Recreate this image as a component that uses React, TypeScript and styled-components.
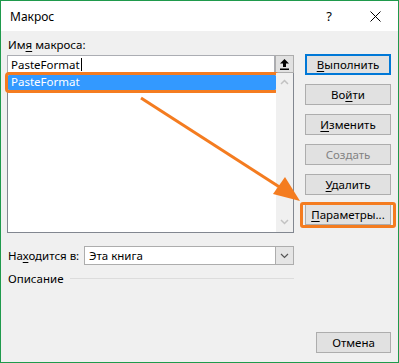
import styled, { createGlobalStyle } from "styled-components"

const GlobalStyle = createGlobalStyle`
  html, body {
    margin: 0;
    padding: 0;
    background: #ffffff;
  }
`

const ORANGE = "#f47c20"

const Window = styled.div`
  position: relative;
  width: 399px;
  height: 363px;
  box-sizing: border-box;
  border: 1px solid #1f9a4c;
  background: #f0f0f0;
  display: flex;
  flex-direction: column;
  font-family: "Noto Sans", "Liberation Sans", sans-serif;
  font-size: 11.5px;
  color: #000;
`

const TitleBar = styled.div`
  height: 30px;
  background: #ffffff;
  display: flex;
  align-items: center;
  padding-left: 9px;
`

const Title = styled.div`
  flex: 1;
  font-size: 12px;
`

const TitleButton = styled.div`
  width: 46px;
  height: 30px;
  display: flex;
  align-items: center;
  justify-content: center;
  font-size: 13px;
`

const Body = styled.div`
  flex: 1;
  display: flex;
  flex-direction: column;
  padding: 6px 7px 9px 6px;
`

const Main = styled.div`
  display: grid;
  grid-template-columns: 287px 86px;
  column-gap: 11px;
`

const LeftColumn = styled.div`
  display: flex;
  flex-direction: column;
`

const Label = styled.div`
  height: 18px;
  line-height: 16px;
  padding-left: 1px;
`

const InputRow = styled.div`
  display: flex;
  height: 18px;
`

const TextInput = styled.div`
  flex: 1;
  box-sizing: border-box;
  border: 1px solid #abadb3;
  background: #fff;
  padding-left: 3px;
  line-height: 15px;
  display: flex;
  align-items: center;
`

const Caret = styled.span`
  display: inline-block;
  width: 1px;
  height: 13px;
  background: #000;
  margin-left: 1px;
`

const IconButton = styled.div`
  width: 19px;
  box-sizing: border-box;
  border: 1px solid #adadad;
  background: #e1e1e1;
  display: flex;
  align-items: center;
  justify-content: center;
`

const ListBox = styled.div`
  height: 160px;
  box-sizing: border-box;
  border: 1px solid #828790;
  border-top: none;
  background: #fff;
  display: flex;
`

const ListItems = styled.div`
  flex: 1;
  padding-top: 2px;
`

const ListItem = styled.div<{ $selected?: boolean }>`
  height: 15px;
  line-height: 14px;
  padding-left: 3px;
  background: ${(p) => (p.$selected ? "#3399ff" : "transparent")};
  color: ${(p) => (p.$selected ? "#fff" : "#000")};
  outline: ${(p) => (p.$selected ? `3px solid ${ORANGE}` : "none")};
  outline-offset: 0;
  border-radius: 1px;
`

const ScrollBar = styled.div`
  width: 17px;
  background: #f0f0f0;
  display: flex;
  flex-direction: column;
  justify-content: space-between;
  align-items: center;
  padding: 6px 0 7px;
`

const Combo = styled.div`
  flex: 1;
  display: flex;
  height: 19px;
  box-sizing: border-box;
  border: 1px solid #adadad;
  background: #fff;
`

const ComboText = styled.div`
  flex: 1;
  padding-left: 4px;
  line-height: 17px;
`

const ComboButton = styled.div`
  width: 17px;
  border-left: 1px solid #adadad;
  background: #e5e5e5;
  display: flex;
  align-items: center;
  justify-content: center;
`

const LocationRow = styled.div`
  display: flex;
  align-items: center;
  margin-top: 13px;
`

const LocationLabel = styled.div`
  width: 76px;
  padding-left: 1px;
`

const SectionRow = styled.div`
  display: flex;
  align-items: center;
  gap: 7px;
  margin-top: 5px;
  padding-left: 1px;
  height: 16px;
`

const SectionLine = styled.div`
  flex: 1;
  height: 1px;
  background: #dcdcdc;
`

const ButtonColumn = styled.div`
  display: flex;
  flex-direction: column;
  gap: 9px;
  padding-top: 17px;
`

const Button = styled.div<{ $default?: boolean; $disabled?: boolean; $highlight?: boolean }>`
  position: relative;
  height: 21px;
  box-sizing: border-box;
  border: ${(p) => (p.$default ? "2px solid #0078d7" : "1px solid #adadad")};
  background: #e1e1e1;
  color: ${(p) => (p.$disabled ? "#838383" : "#000")};
  display: flex;
  align-items: center;
  justify-content: center;

  ${(p) =>
    p.$highlight &&
    `
    &::after {
      content: "";
      position: absolute;
      inset: -3px -6px -4px -6px;
      border: 3px solid ${ORANGE};
      border-radius: 3px;
    }
  `}
`

const Footer = styled.div`
  flex: 1;
  display: flex;
  justify-content: flex-end;
  align-items: flex-end;
`

const CancelButton = styled(Button)`
  width: 75px;
`

const Key = styled.span`
  text-decoration: underline;
  text-underline-offset: 2px;
`

const Overlay = styled.svg`
  position: absolute;
  left: 0;
  top: 0;
  pointer-events: none;
`

function Chevron({ down }: { down?: boolean }) {
  return (
    <svg width="9" height="6" viewBox="0 0 9 6">
      <polyline
        points={down ? "1,1 4.5,4.5 8,1" : "1,5 4.5,1.5 8,5"}
        fill="none"
        stroke="#c2c2c2"
        strokeWidth="1.5"
      />
    </svg>
  )
}

function App() {
  return (
    <>
      <GlobalStyle />
      <Window>
        <TitleBar>
          <Title>Макрос</Title>
          <TitleButton>?</TitleButton>
          <TitleButton>
            <svg width="11" height="11" viewBox="0 0 11 11">
              <path d="M0.5 0.5 L10.5 10.5 M10.5 0.5 L0.5 10.5" stroke="#000" strokeWidth="1" />
            </svg>
          </TitleButton>
        </TitleBar>

        <Body>
          <Main>
            <LeftColumn>
              <Label>
                Им<Key>я</Key> макроса:
              </Label>
              <InputRow>
                <TextInput>
                  PasteFormat
                  <Caret />
                </TextInput>
                <IconButton>
                  <svg width="9" height="11" viewBox="0 0 9 11">
                    <path d="M4.5 0 L9 4.5 L6 4.5 L6 8 L3 8 L3 4.5 L0 4.5 Z" fill="#000" />
                    <rect x="0" y="9.5" width="9" height="1.5" fill="#000" />
                  </svg>
                </IconButton>
              </InputRow>
              <ListBox>
                <ListItems>
                  <ListItem $selected>PasteFormat</ListItem>
                </ListItems>
                <ScrollBar>
                  <Chevron />
                  <Chevron down />
                </ScrollBar>
              </ListBox>

              <LocationRow>
                <LocationLabel>
                  На<Key>х</Key>одится в:
                </LocationLabel>
                <Combo>
                  <ComboText>Эта книга</ComboText>
                  <ComboButton>
                    <svg width="9" height="6" viewBox="0 0 9 6">
                      <polyline points="1,1 4.5,4.5 8,1" fill="none" stroke="#555" strokeWidth="1.2" />
                    </svg>
                  </ComboButton>
                </Combo>
              </LocationRow>

              <SectionRow>
                <span>Описание</span>
                <SectionLine />
              </SectionRow>
            </LeftColumn>

            <ButtonColumn>
              <Button $default>
                <span>
                  <Key>В</Key>ыполнить
                </span>
              </Button>
              <Button>
                <span>
                  Во<Key>й</Key>ти
                </span>
              </Button>
              <Button>
                <span>
                  <Key>И</Key>зменить
                </span>
              </Button>
              <Button $disabled>Создать</Button>
              <Button>
                <span>
                  <Key>У</Key>далить
                </span>
              </Button>
              <Button $highlight>
                <span>
                  <Key>П</Key>араметры...
                </span>
              </Button>
            </ButtonColumn>
          </Main>

          <Footer>
            <CancelButton>Отмена</CancelButton>
          </Footer>
        </Body>

        <Overlay width="399" height="363" viewBox="0 0 399 363">
          <line x1="140" y1="97" x2="280" y2="187" stroke={ORANGE} strokeWidth="3" />
          <polygon points="299,200 272,193 284,176" fill={ORANGE} />
        </Overlay>
      </Window>
    </>
  )
}

export default App
